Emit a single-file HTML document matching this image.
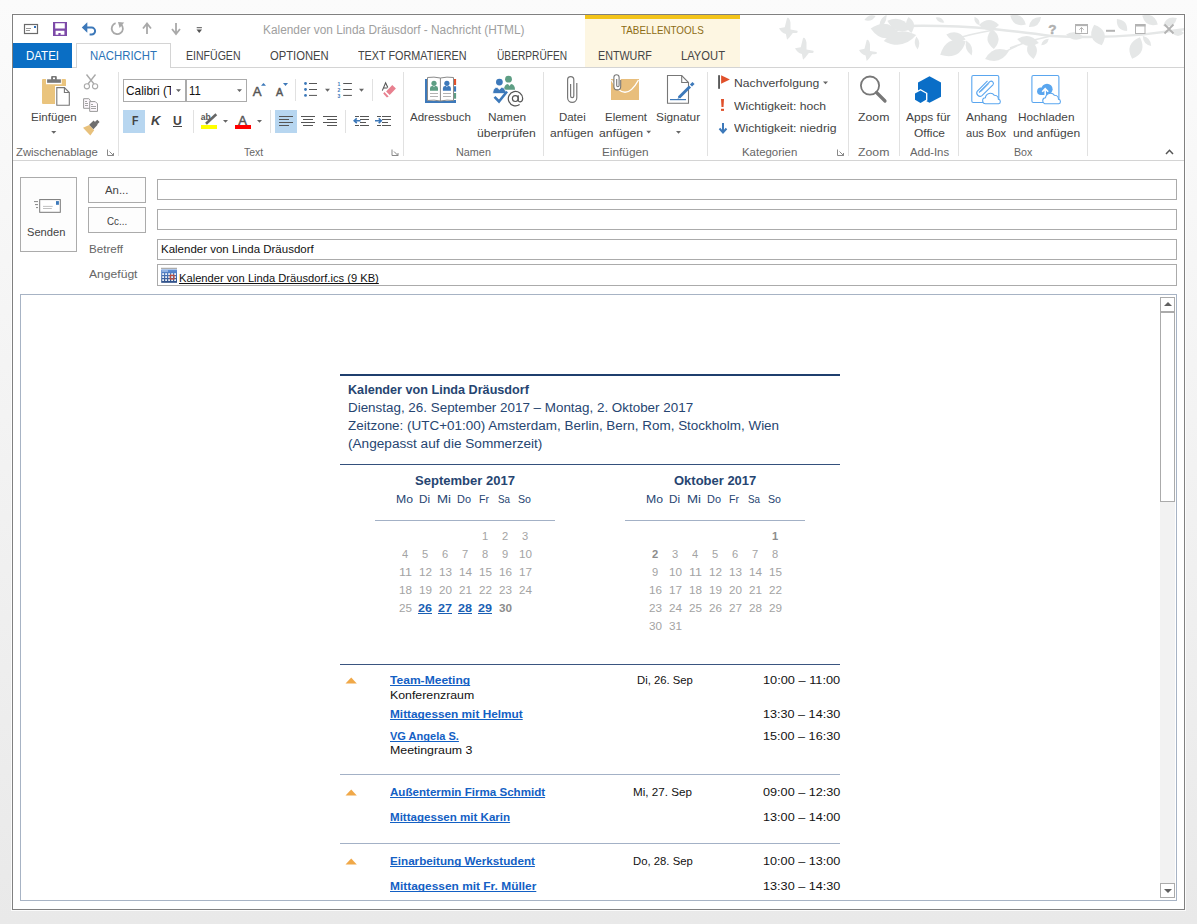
<!DOCTYPE html>
<html><head><meta charset="utf-8">
<style>
*{margin:0;padding:0;box-sizing:border-box}
html,body{width:1197px;height:924px;overflow:hidden}
body{background:linear-gradient(#fbfbfb,#f3f3f3 45%,#e9e9e9);font-family:"Liberation Sans",sans-serif;position:relative}
.a{position:absolute}
.t{text-decoration-skip-ink:none;position:absolute;white-space:nowrap;line-height:1;transform-origin:0 0}
svg{position:absolute;overflow:visible}
</style></head><body>
<div class="a" style="left:12px;top:14px;width:1173px;height:896px;border:1px solid #808080;background:#fff;box-shadow:0 0 0 1px rgba(255,255,255,.8)"></div>
<svg style="left:0;top:0" width="1197" height="924"><defs><clipPath id="tb"><rect x="740" y="15" width="444" height="52"></rect></clipPath></defs><g clip-path="url(#tb)"><path transform="translate(779 18) scale(1.15)" d="M0 9 L5 8 L7 0 Q9 -1 10 4 L10 10 L16 11 Q17 13 14 13 L12 13 L9 17 L7 19 L6 14 Q2 13 0 9Z" fill="#e5e7e7"></path><path transform="translate(795 38) scale(1.15)" d="M0 9 L5 8 L7 0 Q9 -1 10 4 L10 10 L16 11 Q17 13 14 13 L12 13 L9 17 L7 19 L6 14 Q2 13 0 9Z" fill="#e5e7e7"></path><path transform="translate(859 40) scale(1.1)" d="M0 9 L5 8 L7 0 Q9 -1 10 4 L10 10 L16 11 Q17 13 14 13 L12 13 L9 17 L7 19 L6 14 Q2 13 0 9Z" fill="#e5e7e7"></path><path d="M905 26 Q950 25 993 29 Q1030 33 1051 36 Q1098 38.5 1142 34.6 Q1165 32 1186 29" fill="none" stroke="#e5e7e7" stroke-width="2.4"></path><path d="M991 30.5 Q970 34 952 40 M1000 54.6 Q1015 46 1029 41 M1051 36 Q1030 40 1010 48 M885 33 Q900 30 913 26" fill="none" stroke="#e5e7e7" stroke-width="1.4"></path><path d="M870.7 28.5 Q882.5 45.3 899.3 33.5 Q887.5 16.7 870.7 28.5Z" fill="#e5e7e7"></path><path d="M879.5 27.1 Q887.2 23.4 886.5 14.9 Q878.8 18.6 879.5 27.1Z" fill="#e5e7e7"></path><path d="M887.3 20.7 Q895.2 35.6 910.7 29.3 Q902.8 14.4 887.3 20.7Z" fill="#e5e7e7"></path><path d="M908.6 17.1 Q902.1 26.4 911.4 32.9 Q917.9 23.6 908.6 17.1Z" fill="#e5e7e7"></path><path d="M883.8 40.9 Q902.3 51.0 916.2 35.1 Q897.7 25.0 883.8 40.9Z" fill="#e5e7e7"></path><path d="M916.4 36.5 Q912.5 43.4 917.6 49.5 Q921.5 42.6 916.4 36.5Z" fill="#e5e7e7"></path><path d="M946.3 34.4 Q953.7 45.7 965.7 39.6 Q958.3 28.3 946.3 34.4Z" fill="#e5e7e7"></path><path d="M940.2 54.8 Q959.8 60.8 965.8 41.2 Q946.2 35.2 940.2 54.8Z" fill="#e5e7e7"></path><path d="M966.3 40.5 Q963.7 49.9 971.7 55.5 Q974.3 46.1 966.3 40.5Z" fill="#e5e7e7"></path><path d="M979.0 25.0 Q989.0 35.0 999.0 25.0 Q989.0 15.0 979.0 25.0Z" fill="#e5e7e7"></path><path d="M992.1 29.0 Q982.0 40.0 993.9 49.0 Q1004.0 38.0 992.1 29.0Z" fill="#e5e7e7"></path><path d="M974.5 16.7 Q973.5 23.0 979.5 25.3 Q980.5 19.0 974.5 16.7Z" fill="#e5e7e7"></path><path d="M985.1 58.9 Q1000.5 65.7 1008.9 51.1 Q993.5 44.3 985.1 58.9Z" fill="#e5e7e7"></path><path d="M864.4 20.1 Q871.6 22.5 875.6 15.9 Q868.4 13.5 864.4 20.1Z" fill="#e5e7e7"></path><path d="M1010.2 15.5 Q1013.5 27.8 1025.8 24.5 Q1022.5 12.2 1010.2 15.5Z" fill="#e5e7e7"></path><path d="M1028.9 27.1 Q1039.6 27.5 1041.1 16.9 Q1030.4 16.5 1028.9 27.1Z" fill="#e5e7e7"></path><path d="M1017.2 39.1 Q1026.3 50.7 1038.8 42.9 Q1029.7 31.3 1017.2 39.1Z" fill="#e5e7e7"></path><path d="M1030.4 41.1 Q1022.3 51.7 1033.6 58.9 Q1041.7 48.3 1030.4 41.1Z" fill="#e5e7e7"></path><path d="M1041.2 45.2 Q1047.6 45.1 1048.8 38.8 Q1042.4 38.9 1041.2 45.2Z" fill="#e5e7e7"></path><path d="M1094.2 24.7 Q1085.6 39.5 1101.8 45.3 Q1110.4 30.5 1094.2 24.7Z" fill="#e5e7e7"></path><path d="M1066.1 34.4 Q1073.7 43.1 1083.9 37.6 Q1076.3 28.9 1066.1 34.4Z" fill="#e5e7e7"></path><path d="M1116.9 18.9 Q1115.9 30.1 1127.1 31.1 Q1128.1 19.9 1116.9 18.9Z" fill="#e5e7e7"></path><path d="M1132.1 58.8 Q1147.9 52.3 1139.9 37.2 Q1124.1 43.7 1132.1 58.8Z" fill="#e5e7e7"></path><path d="M1142.8 36.0 Q1143.0 44.3 1151.2 46.0 Q1151.0 37.7 1142.8 36.0Z" fill="#e5e7e7"></path><path d="M1142.2 15.5 Q1145.5 27.8 1157.8 24.5 Q1154.5 12.2 1142.2 15.5Z" fill="#e5e7e7"></path><path d="M1163.1 26.0 Q1174.0 28.9 1176.9 18.0 Q1166.0 15.1 1163.1 26.0Z" fill="#e5e7e7"></path><path d="M1172.0 33.0 Q1178.0 39.0 1184.0 33.0 Q1178.0 27.0 1172.0 33.0Z" fill="#e5e7e7"></path><path d="M935.7 17.5 Q938.0 23.5 944.3 22.5 Q942.0 16.5 935.7 17.5Z" fill="#e5e7e7"></path></g></svg>
<div class="a" style="left:585px;top:15px;width:155px;height:52px;background:#fdf6e2"></div>
<div class="a" style="left:585px;top:15px;width:155px;height:4px;background:#f3c41a"></div>
<div class="t" style="left: 621px; top: 25px; font-size: 11.5px; color: rgb(140, 108, 20); transform: scaleX(0.8549);">TABELLENTOOLS</div>
<div class="t" style="left: 262.5px; top: 24px; font-size: 12.5px; color: rgb(160, 160, 160); transform: scaleX(0.9481);">Kalender von Linda Dräusdorf - Nachricht (HTML)</div>
<div class="a" style="left:13px;top:67px;width:1171px;height:1px;background:#d4d4d4"></div>
<div class="a" style="left:13px;top:43px;width:59px;height:25px;background:#0a6ec4"></div>
<div class="a" style="left:76px;top:43px;width:95px;height:25px;background:#fff;border:1px solid #d4d4d4;border-bottom:none"></div>
<div class="t" style="left: 26px; top: 49px; font-size: 13px; color: rgb(255, 255, 255); transform: scaleX(0.8841);">DATEI</div>
<div class="t" style="left: 89.6px; top: 49px; font-size: 13px; color: rgb(43, 115, 183); transform: scaleX(0.8738);">NACHRICHT</div>
<div class="t" style="left: 186px; top: 49px; font-size: 13px; color: rgb(68, 68, 68); transform: scaleX(0.8114);">EINFÜGEN</div>
<div class="t" style="left: 270px; top: 49px; font-size: 13px; color: rgb(68, 68, 68); transform: scaleX(0.8644);">OPTIONEN</div>
<div class="t" style="left: 358.1px; top: 49px; font-size: 13px; color: rgb(68, 68, 68); transform: scaleX(0.833);">TEXT FORMATIEREN</div>
<div class="t" style="left: 496.6px; top: 49px; font-size: 13px; color: rgb(68, 68, 68); transform: scaleX(0.7826);">ÜBERPRÜFEN</div>
<div class="t" style="left: 598.3px; top: 49px; font-size: 13px; color: rgb(68, 68, 68); transform: scaleX(0.8262);">ENTWURF</div>
<div class="t" style="left: 681.4px; top: 49px; font-size: 13px; color: rgb(68, 68, 68); transform: scaleX(0.8617);">LAYOUT</div>
<div class="a" style="left:13px;top:160px;width:1171px;height:1px;background:#d4d4d4"></div>
<div class="a" style="left:118px;top:72px;width:1px;height:84px;background:#e1e1e1"></div>
<div class="a" style="left:403px;top:72px;width:1px;height:84px;background:#e1e1e1"></div>
<div class="a" style="left:543px;top:72px;width:1px;height:84px;background:#e1e1e1"></div>
<div class="a" style="left:707px;top:72px;width:1px;height:84px;background:#e1e1e1"></div>
<div class="a" style="left:848px;top:72px;width:1px;height:84px;background:#e1e1e1"></div>
<div class="a" style="left:899px;top:72px;width:1px;height:84px;background:#e1e1e1"></div>
<div class="a" style="left:958px;top:72px;width:1px;height:84px;background:#e1e1e1"></div>
<div class="a" style="left:1087px;top:72px;width:1px;height:84px;background:#e1e1e1"></div>
<div class="t" style="left: 16.2px; top: 148px; font-size: 10.2px; color: rgb(102, 102, 102); transform: scaleX(1.1124);">Zwischenablage</div>
<div class="t" style="left: 243.5px; top: 148px; font-size: 10.2px; color: rgb(102, 102, 102); transform: scaleX(1.0221);">Text</div>
<div class="t" style="left: 455.7px; top: 148px; font-size: 10.2px; color: rgb(102, 102, 102); transform: scaleX(1.0626);">Namen</div>
<div class="t" style="left: 602px; top: 148px; font-size: 10.2px; color: rgb(102, 102, 102); transform: scaleX(1.1587);">Einfügen</div>
<div class="t" style="left: 742.4px; top: 148px; font-size: 10.2px; color: rgb(102, 102, 102); transform: scaleX(1.1221);">Kategorien</div>
<div class="t" style="left: 858px; top: 148px; font-size: 10.2px; color: rgb(102, 102, 102); transform: scaleX(1.2055);">Zoom</div>
<div class="t" style="left: 909.6px; top: 148px; font-size: 10.2px; color: rgb(102, 102, 102); transform: scaleX(1.1137);">Add-Ins</div>
<div class="t" style="left: 1013.8px; top: 148px; font-size: 10.2px; color: rgb(102, 102, 102); transform: scaleX(1.0477);">Box</div>
<div class="t" style="left: 30.7px; top: 112px; font-size: 11px; color: rgb(68, 68, 68); transform: scaleX(1.0521);">Einfügen</div>
<div class="t" style="left: 410.4px; top: 112px; font-size: 11px; color: rgb(68, 68, 68); transform: scaleX(1.0466);">Adressbuch</div>
<div class="t" style="left: 487.5px; top: 112px; font-size: 11px; color: rgb(68, 68, 68); transform: scaleX(1.0742);">Namen</div>
<div class="t" style="left: 477.2px; top: 128px; font-size: 11px; color: rgb(68, 68, 68); transform: scaleX(1.1049);">überprüfen</div>
<div class="t" style="left: 559.3px; top: 112px; font-size: 11px; color: rgb(68, 68, 68); transform: scaleX(1.0394);">Datei</div>
<div class="t" style="left: 550.2px; top: 128px; font-size: 11px; color: rgb(68, 68, 68); transform: scaleX(1.0939);">anfügen</div>
<div class="t" style="left: 604.6px; top: 112px; font-size: 11px; color: rgb(68, 68, 68); transform: scaleX(1.0407);">Element</div>
<div class="t" style="left: 599.4px; top: 128px; font-size: 11px; color: rgb(68, 68, 68); transform: scaleX(1.109);">anfügen</div>
<div class="t" style="left: 655.9px; top: 112px; font-size: 11px; color: rgb(68, 68, 68); transform: scaleX(1.076);">Signatur</div>
<div class="t" style="left: 734.3px; top: 78px; font-size: 11px; color: rgb(68, 68, 68); transform: scaleX(1.1056);">Nachverfolgung</div>
<div class="t" style="left: 734.3px; top: 101px; font-size: 11px; color: rgb(68, 68, 68); transform: scaleX(1.1076);">Wichtigkeit: hoch</div>
<div class="t" style="left: 734.3px; top: 123px; font-size: 11px; color: rgb(68, 68, 68); transform: scaleX(1.1102);">Wichtigkeit: niedrig</div>
<div class="t" style="left: 858px; top: 112px; font-size: 11px; color: rgb(68, 68, 68); transform: scaleX(1.1164);">Zoom</div>
<div class="t" style="left: 906.3px; top: 112px; font-size: 11px; color: rgb(68, 68, 68); transform: scaleX(1.0886);">Apps für</div>
<div class="t" style="left: 914px; top: 128px; font-size: 11px; color: rgb(68, 68, 68); transform: scaleX(1.0865);">Office</div>
<div class="t" style="left: 965.6px; top: 112px; font-size: 11px; color: rgb(68, 68, 68); transform: scaleX(1.0834);">Anhang</div>
<div class="t" style="left: 966px; top: 128px; font-size: 11px; color: rgb(68, 68, 68); transform: scaleX(1.0088);">aus Box</div>
<div class="t" style="left: 1017.8px; top: 112px; font-size: 11px; color: rgb(68, 68, 68); transform: scaleX(1.0743);">Hochladen</div>
<div class="t" style="left: 1012.6px; top: 128px; font-size: 11px; color: rgb(68, 68, 68); transform: scaleX(1.0969);">und anfügen</div>
<div class="a" style="left:123px;top:79px;width:124px;height:23px;border:1px solid #ababab;background:#fff"></div>
<div class="a" style="left:185px;top:79px;width:2px;height:23px;background:#ababab"></div>
<div class="t" style="left: 126.4px; top: 85px; font-size: 12.8px; color: rgb(17, 17, 17); transform: scaleX(0.9267);">Calibri (T</div>
<div class="a" style="left:171.3px;top:82px;width:5px;height:17px;background:#fff"></div>
<div class="t" style="left: 188.6px; top: 85px; font-size: 12.5px; color: rgb(17, 17, 17); transform: scaleX(0.9011);">11</div>
<div class="a" style="left:123px;top:110px;width:22px;height:23px;background:#b7d6f0"></div>
<div class="a" style="left:275px;top:110px;width:22px;height:23px;background:#b7d6f0"></div>
<div class="t" style="left: 131.5px; top: 115px; font-size: 12px; color: rgb(68, 68, 68); font-weight: bold; transform: scaleX(0.8851);">F</div>
<div class="t" style="left: 150.5px; top: 115px; font-size: 12px; color: rgb(68, 68, 68); font-weight: bold; font-style: italic; transform: scaleX(1.0955);">K</div>
<div class="t" style="left: 173.2px; top: 115px; font-size: 12px; color: rgb(68, 68, 68); font-weight: bold; transform: scaleX(1.0148);">U</div>
<div class="a" style="left:173px;top:126px;width:9px;height:1px;background:#444"></div>
<div class="a" style="left:20px;top:177px;width:57px;height:75px;border:1px solid #ababab;background:#fdfdfd"></div>
<div class="a" style="left:88px;top:177px;width:58px;height:26px;border:1px solid #ababab;background:#fdfdfd"></div>
<div class="a" style="left:88px;top:207px;width:58px;height:26px;border:1px solid #ababab;background:#fdfdfd"></div>
<div class="a" style="left:157px;top:179px;width:1020px;height:21px;border:1px solid #ababab;background:#fff"></div>
<div class="a" style="left:157px;top:209px;width:1020px;height:21px;border:1px solid #ababab;background:#fff"></div>
<div class="a" style="left:157px;top:239px;width:1020px;height:21px;border:1px solid #ababab;background:#fff"></div>
<div class="a" style="left:157px;top:264px;width:1020px;height:22px;border:1px solid #ababab;background:#fff"></div>
<div class="t" style="left: 27.4px; top: 227px; font-size: 11.5px; color: rgb(68, 68, 68); transform: scaleX(0.9683);">Senden</div>
<div class="t" style="left: 105.2px; top: 185px; font-size: 11.5px; color: rgb(68, 68, 68); transform: scaleX(0.9892);">An...</div>
<div class="t" style="left: 106.9px; top: 216px; font-size: 11.5px; color: rgb(68, 68, 68); transform: scaleX(0.8502);">Cc...</div>
<div class="t" style="left: 88.5px; top: 244px; font-size: 11px; color: rgb(102, 102, 102); transform: scaleX(1.0584);">Betreff</div>
<div class="t" style="left: 88.5px; top: 269px; font-size: 11px; color: rgb(102, 102, 102); transform: scaleX(1.1011);">Angefügt</div>
<div class="t" style="left: 161.4px; top: 244px; font-size: 11.5px; color: rgb(17, 17, 17); transform: scaleX(0.9994);">Kalender von Linda Dräusdorf</div>
<div class="t" style="left: 178.8px; top: 273px; font-size: 11.5px; color: rgb(17, 17, 17); text-decoration: underline; transform: scaleX(0.9707);">Kalender von Linda Dräusdorf.ics (9 KB)</div>
<div class="a" style="left:20px;top:294px;width:1157px;height:607px;border:1px solid #a7b3c4;background:#fff"></div>
<div class="a" style="left:1160px;top:297px;width:15px;height:601px;background:#f2f2f2"></div>
<div class="a" style="left:1160px;top:297px;width:15px;height:15px;border:1px solid #ababab;background:#fff"></div>
<div class="a" style="left:1160px;top:312px;width:15px;height:190px;border:1px solid #ababab;background:#fff"></div>
<div class="a" style="left:1160px;top:883px;width:15px;height:15px;border:1px solid #ababab;background:#fff"></div>
<svg style="left:1163px;top:301px" width="10" height="6"><path d="M1 5 L5 1 L9 5Z" fill="#606060"></path></svg>
<svg style="left:1163px;top:888px" width="10" height="6"><path d="M1 1 L5 5 L9 1Z" fill="#606060"></path></svg>
<div class="a" style="left:340px;top:374px;width:500px;height:2px;background:#1f3f6e"></div>
<div class="a" style="left:340px;top:464px;width:500px;height:1px;background:#34507c"></div>
<div class="t" style="left: 347.6px; top: 384px; font-size: 12.5px; color: rgb(38, 69, 113); font-weight: bold; transform: scaleX(1.0095);">Kalender von Linda Dräusdorf</div>
<div class="t" style="left: 347.6px; top: 402px; font-size: 12.5px; color: rgb(38, 69, 113); transform: scaleX(1.0726);">Dienstag, 26. September 2017 – Montag, 2. Oktober 2017</div>
<div class="t" style="left: 347.6px; top: 420px; font-size: 12.5px; color: rgb(38, 69, 113); transform: scaleX(1.0764);">Zeitzone: (UTC+01:00) Amsterdam, Berlin, Bern, Rom, Stockholm, Wien</div>
<div class="t" style="left: 347.6px; top: 438px; font-size: 12.5px; color: rgb(38, 69, 113); transform: scaleX(1.0887);">(Angepasst auf die Sommerzeit)</div>
<div class="t" style="left: 414.9px; top: 475px; font-size: 12.2px; color: rgb(38, 69, 113); font-weight: bold; transform: scaleX(1.0695);">September 2017</div>
<div class="t" style="left: 395.7px; top: 494px; font-size: 10.8px; color: rgb(38, 69, 113); transform: scaleX(1.1333);">Mo</div>
<div class="t" style="left: 418.7px; top: 494px; font-size: 10.8px; color: rgb(38, 69, 113); transform: scaleX(1.0781);">Di</div>
<div class="t" style="left: 437.2px; top: 494px; font-size: 10.8px; color: rgb(38, 69, 113); transform: scaleX(1.2274);">Mi</div>
<div class="t" style="left: 457.2px; top: 494px; font-size: 10.8px; color: rgb(38, 69, 113); transform: scaleX(1.0136);">Do</div>
<div class="t" style="left: 479.2px; top: 494px; font-size: 10.8px; color: rgb(38, 69, 113); transform: scaleX(0.9801);">Fr</div>
<div class="t" style="left: 498.2px; top: 494px; font-size: 10.8px; color: rgb(38, 69, 113); transform: scaleX(0.9078);">Sa</div>
<div class="t" style="left: 517.7px; top: 494px; font-size: 10.8px; color: rgb(38, 69, 113); transform: scaleX(0.9835);">So</div>
<div class="a" style="left:375px;top:520px;width:180px;height:1px;background:#a3b1c6"></div>
<div class="t" style="left: 481.9px; top: 532px; font-size: 10.2px; color: rgb(163, 163, 163); transform: scaleX(1.0931);">1</div>
<div class="t" style="left: 501.9px; top: 532px; font-size: 10.2px; color: rgb(163, 163, 163); transform: scaleX(1.0931);">2</div>
<div class="t" style="left: 521.9px; top: 532px; font-size: 10.2px; color: rgb(163, 163, 163); transform: scaleX(1.0931);">3</div>
<div class="t" style="left: 401.9px; top: 550px; font-size: 10.2px; color: rgb(163, 163, 163); transform: scaleX(1.0931);">4</div>
<div class="t" style="left: 421.9px; top: 550px; font-size: 10.2px; color: rgb(163, 163, 163); transform: scaleX(1.0931);">5</div>
<div class="t" style="left: 441.9px; top: 550px; font-size: 10.2px; color: rgb(163, 163, 163); transform: scaleX(1.0931);">6</div>
<div class="t" style="left: 461.9px; top: 550px; font-size: 10.2px; color: rgb(163, 163, 163); transform: scaleX(1.0931);">7</div>
<div class="t" style="left: 481.9px; top: 550px; font-size: 10.2px; color: rgb(163, 163, 163); transform: scaleX(1.0931);">8</div>
<div class="t" style="left: 501.9px; top: 550px; font-size: 10.2px; color: rgb(163, 163, 163); transform: scaleX(1.0931);">9</div>
<div class="t" style="left: 518.5px; top: 550px; font-size: 10.2px; color: rgb(163, 163, 163); transform: scaleX(1.146);">10</div>
<div class="t" style="left: 398.5px; top: 568px; font-size: 10.2px; color: rgb(163, 163, 163); transform: scaleX(1.229);">11</div>
<div class="t" style="left: 418.5px; top: 568px; font-size: 10.2px; color: rgb(163, 163, 163); transform: scaleX(1.146);">12</div>
<div class="t" style="left: 438.5px; top: 568px; font-size: 10.2px; color: rgb(163, 163, 163); transform: scaleX(1.146);">13</div>
<div class="t" style="left: 458.5px; top: 568px; font-size: 10.2px; color: rgb(163, 163, 163); transform: scaleX(1.146);">14</div>
<div class="t" style="left: 478.5px; top: 568px; font-size: 10.2px; color: rgb(163, 163, 163); transform: scaleX(1.146);">15</div>
<div class="t" style="left: 498.5px; top: 568px; font-size: 10.2px; color: rgb(163, 163, 163); transform: scaleX(1.146);">16</div>
<div class="t" style="left: 518.5px; top: 568px; font-size: 10.2px; color: rgb(163, 163, 163); transform: scaleX(1.146);">17</div>
<div class="t" style="left: 398.5px; top: 586px; font-size: 10.2px; color: rgb(163, 163, 163); transform: scaleX(1.146);">18</div>
<div class="t" style="left: 418.5px; top: 586px; font-size: 10.2px; color: rgb(163, 163, 163); transform: scaleX(1.146);">19</div>
<div class="t" style="left: 438.5px; top: 586px; font-size: 10.2px; color: rgb(163, 163, 163); transform: scaleX(1.146);">20</div>
<div class="t" style="left: 458.5px; top: 586px; font-size: 10.2px; color: rgb(163, 163, 163); transform: scaleX(1.146);">21</div>
<div class="t" style="left: 478.5px; top: 586px; font-size: 10.2px; color: rgb(163, 163, 163); transform: scaleX(1.146);">22</div>
<div class="t" style="left: 498.5px; top: 586px; font-size: 10.2px; color: rgb(163, 163, 163); transform: scaleX(1.146);">23</div>
<div class="t" style="left: 518.5px; top: 586px; font-size: 10.2px; color: rgb(163, 163, 163); transform: scaleX(1.146);">24</div>
<div class="t" style="left: 398.5px; top: 604px; font-size: 10.2px; color: rgb(163, 163, 163); transform: scaleX(1.146);">25</div>
<div class="t" style="left: 418px; top: 604px; font-size: 10.2px; color: rgb(26, 95, 180); font-weight: bold; text-decoration: underline; transform: scaleX(1.2342);">26</div>
<div class="t" style="left: 438px; top: 604px; font-size: 10.2px; color: rgb(26, 95, 180); font-weight: bold; text-decoration: underline; transform: scaleX(1.2342);">27</div>
<div class="t" style="left: 458px; top: 604px; font-size: 10.2px; color: rgb(26, 95, 180); font-weight: bold; text-decoration: underline; transform: scaleX(1.2342);">28</div>
<div class="t" style="left: 478px; top: 604px; font-size: 10.2px; color: rgb(26, 95, 180); font-weight: bold; text-decoration: underline; transform: scaleX(1.2342);">29</div>
<div class="t" style="left: 498.5px; top: 604px; font-size: 10.2px; color: rgb(140, 140, 140); font-weight: bold; transform: scaleX(1.146);">30</div>
<div class="t" style="left: 674.2px; top: 475px; font-size: 12.2px; color: rgb(38, 69, 113); font-weight: bold; transform: scaleX(1.0656);">Oktober 2017</div>
<div class="t" style="left: 645.7px; top: 494px; font-size: 10.8px; color: rgb(38, 69, 113); transform: scaleX(1.1333);">Mo</div>
<div class="t" style="left: 668.7px; top: 494px; font-size: 10.8px; color: rgb(38, 69, 113); transform: scaleX(1.0781);">Di</div>
<div class="t" style="left: 687.2px; top: 494px; font-size: 10.8px; color: rgb(38, 69, 113); transform: scaleX(1.2274);">Mi</div>
<div class="t" style="left: 707.2px; top: 494px; font-size: 10.8px; color: rgb(38, 69, 113); transform: scaleX(1.0136);">Do</div>
<div class="t" style="left: 729.2px; top: 494px; font-size: 10.8px; color: rgb(38, 69, 113); transform: scaleX(0.9801);">Fr</div>
<div class="t" style="left: 748.2px; top: 494px; font-size: 10.8px; color: rgb(38, 69, 113); transform: scaleX(0.9078);">Sa</div>
<div class="t" style="left: 767.7px; top: 494px; font-size: 10.8px; color: rgb(38, 69, 113); transform: scaleX(0.9835);">So</div>
<div class="a" style="left:625px;top:520px;width:180px;height:1px;background:#a3b1c6"></div>
<div class="t" style="left: 771.9px; top: 532px; font-size: 10.2px; color: rgb(140, 140, 140); font-weight: bold; transform: scaleX(1.0931);">1</div>
<div class="t" style="left: 651.9px; top: 550px; font-size: 10.2px; color: rgb(140, 140, 140); font-weight: bold; transform: scaleX(1.0931);">2</div>
<div class="t" style="left: 671.9px; top: 550px; font-size: 10.2px; color: rgb(163, 163, 163); transform: scaleX(1.0931);">3</div>
<div class="t" style="left: 691.9px; top: 550px; font-size: 10.2px; color: rgb(163, 163, 163); transform: scaleX(1.0931);">4</div>
<div class="t" style="left: 711.9px; top: 550px; font-size: 10.2px; color: rgb(163, 163, 163); transform: scaleX(1.0931);">5</div>
<div class="t" style="left: 731.9px; top: 550px; font-size: 10.2px; color: rgb(163, 163, 163); transform: scaleX(1.0931);">6</div>
<div class="t" style="left: 751.9px; top: 550px; font-size: 10.2px; color: rgb(163, 163, 163); transform: scaleX(1.0931);">7</div>
<div class="t" style="left: 771.9px; top: 550px; font-size: 10.2px; color: rgb(163, 163, 163); transform: scaleX(1.0931);">8</div>
<div class="t" style="left: 651.9px; top: 568px; font-size: 10.2px; color: rgb(163, 163, 163); transform: scaleX(1.0931);">9</div>
<div class="t" style="left: 668.5px; top: 568px; font-size: 10.2px; color: rgb(163, 163, 163); transform: scaleX(1.146);">10</div>
<div class="t" style="left: 688.5px; top: 568px; font-size: 10.2px; color: rgb(163, 163, 163); transform: scaleX(1.229);">11</div>
<div class="t" style="left: 708.5px; top: 568px; font-size: 10.2px; color: rgb(163, 163, 163); transform: scaleX(1.146);">12</div>
<div class="t" style="left: 728.5px; top: 568px; font-size: 10.2px; color: rgb(163, 163, 163); transform: scaleX(1.146);">13</div>
<div class="t" style="left: 748.5px; top: 568px; font-size: 10.2px; color: rgb(163, 163, 163); transform: scaleX(1.146);">14</div>
<div class="t" style="left: 768.5px; top: 568px; font-size: 10.2px; color: rgb(163, 163, 163); transform: scaleX(1.146);">15</div>
<div class="t" style="left: 648.5px; top: 586px; font-size: 10.2px; color: rgb(163, 163, 163); transform: scaleX(1.146);">16</div>
<div class="t" style="left: 668.5px; top: 586px; font-size: 10.2px; color: rgb(163, 163, 163); transform: scaleX(1.146);">17</div>
<div class="t" style="left: 688.5px; top: 586px; font-size: 10.2px; color: rgb(163, 163, 163); transform: scaleX(1.146);">18</div>
<div class="t" style="left: 708.5px; top: 586px; font-size: 10.2px; color: rgb(163, 163, 163); transform: scaleX(1.146);">19</div>
<div class="t" style="left: 728.5px; top: 586px; font-size: 10.2px; color: rgb(163, 163, 163); transform: scaleX(1.146);">20</div>
<div class="t" style="left: 748.5px; top: 586px; font-size: 10.2px; color: rgb(163, 163, 163); transform: scaleX(1.146);">21</div>
<div class="t" style="left: 768.5px; top: 586px; font-size: 10.2px; color: rgb(163, 163, 163); transform: scaleX(1.146);">22</div>
<div class="t" style="left: 648.5px; top: 604px; font-size: 10.2px; color: rgb(163, 163, 163); transform: scaleX(1.146);">23</div>
<div class="t" style="left: 668.5px; top: 604px; font-size: 10.2px; color: rgb(163, 163, 163); transform: scaleX(1.146);">24</div>
<div class="t" style="left: 688.5px; top: 604px; font-size: 10.2px; color: rgb(163, 163, 163); transform: scaleX(1.146);">25</div>
<div class="t" style="left: 708.5px; top: 604px; font-size: 10.2px; color: rgb(163, 163, 163); transform: scaleX(1.146);">26</div>
<div class="t" style="left: 728.5px; top: 604px; font-size: 10.2px; color: rgb(163, 163, 163); transform: scaleX(1.146);">27</div>
<div class="t" style="left: 748.5px; top: 604px; font-size: 10.2px; color: rgb(163, 163, 163); transform: scaleX(1.146);">28</div>
<div class="t" style="left: 768.5px; top: 604px; font-size: 10.2px; color: rgb(163, 163, 163); transform: scaleX(1.146);">29</div>
<div class="t" style="left: 648.5px; top: 622px; font-size: 10.2px; color: rgb(163, 163, 163); transform: scaleX(1.146);">30</div>
<div class="t" style="left: 668.5px; top: 622px; font-size: 10.2px; color: rgb(163, 163, 163); transform: scaleX(1.146);">31</div>
<div class="a" style="left:340px;top:664px;width:500px;height:1px;background:#3a5580"></div>
<div class="a" style="left:340px;top:774px;width:500px;height:1px;background:#a3b1c6"></div>
<div class="a" style="left:340px;top:843px;width:500px;height:1px;background:#a3b1c6"></div>
<svg style="left:345px;top:676.5px" width="13" height="7"><path d="M0.5 6.5 L6.2 0.5 L11.8 6.5Z" fill="#f0a848"></path></svg>
<svg style="left:345px;top:788.5px" width="13" height="7"><path d="M0.5 6.5 L6.2 0.5 L11.8 6.5Z" fill="#f0a848"></path></svg>
<svg style="left:345px;top:857.5px" width="13" height="7"><path d="M0.5 6.5 L6.2 0.5 L11.8 6.5Z" fill="#f0a848"></path></svg>
<div class="t" style="left: 389.7px; top: 675px; font-size: 10.8px; color: rgb(19, 96, 196); font-weight: bold; text-decoration: underline; transform: scaleX(1.117);">Team-Meeting</div>
<div class="t" style="left: 389.7px; top: 690px; font-size: 10.8px; color: rgb(17, 17, 17); transform: scaleX(1.1405);">Konferenzraum</div>
<div class="t" style="left: 389.7px; top: 709px; font-size: 10.8px; color: rgb(19, 96, 196); font-weight: bold; text-decoration: underline; transform: scaleX(1.095);">Mittagessen mit Helmut</div>
<div class="t" style="left: 389.7px; top: 731px; font-size: 10.8px; color: rgb(19, 96, 196); font-weight: bold; text-decoration: underline; transform: scaleX(1.0222);">VG Angela S.</div>
<div class="t" style="left: 389.7px; top: 745px; font-size: 10.8px; color: rgb(17, 17, 17); transform: scaleX(1.1442);">Meetingraum 3</div>
<div class="t" style="left: 636.5px; top: 675px; font-size: 10.8px; color: rgb(17, 17, 17); transform: scaleX(1.0445);">Di, 26. Sep</div>
<div class="t" style="left: 763.3px; top: 675px; font-size: 10.8px; color: rgb(17, 17, 17); transform: scaleX(1.1831);">10:00 – 11:00</div>
<div class="t" style="left: 763.3px; top: 709px; font-size: 10.8px; color: rgb(17, 17, 17); transform: scaleX(1.1689);">13:30 – 14:30</div>
<div class="t" style="left: 763.3px; top: 731px; font-size: 10.8px; color: rgb(17, 17, 17); transform: scaleX(1.1689);">15:00 – 16:30</div>
<div class="t" style="left: 389.7px; top: 787px; font-size: 10.8px; color: rgb(19, 96, 196); font-weight: bold; text-decoration: underline; transform: scaleX(1.0728);">Außentermin Firma Schmidt</div>
<div class="t" style="left: 633.4px; top: 787px; font-size: 10.8px; color: rgb(17, 17, 17); transform: scaleX(1.0783);">Mi, 27. Sep</div>
<div class="t" style="left: 763.1px; top: 787px; font-size: 10.8px; color: rgb(17, 17, 17); transform: scaleX(1.1719);">09:00 – 12:30</div>
<div class="t" style="left: 389.7px; top: 812px; font-size: 10.8px; color: rgb(19, 96, 196); font-weight: bold; text-decoration: underline; transform: scaleX(1.0704);">Mittagessen mit Karin</div>
<div class="t" style="left: 763.1px; top: 812px; font-size: 10.8px; color: rgb(17, 17, 17); transform: scaleX(1.1719);">13:00 – 14:00</div>
<div class="t" style="left: 389.7px; top: 856px; font-size: 10.8px; color: rgb(19, 96, 196); font-weight: bold; text-decoration: underline; transform: scaleX(1.0798);">Einarbeitung Werkstudent</div>
<div class="t" style="left: 632.5px; top: 856px; font-size: 10.8px; color: rgb(17, 17, 17); transform: scaleX(1.0485);">Do, 28. Sep</div>
<div class="t" style="left: 763.1px; top: 856px; font-size: 10.8px; color: rgb(17, 17, 17); transform: scaleX(1.1719);">10:00 – 13:00</div>
<div class="t" style="left: 389.7px; top: 881px; font-size: 10.8px; color: rgb(19, 96, 196); font-weight: bold; text-decoration: underline; transform: scaleX(1.1034);">Mittagessen mit Fr. Müller</div>
<div class="t" style="left: 763.1px; top: 881px; font-size: 10.8px; color: rgb(17, 17, 17); transform: scaleX(1.1719);">13:30 – 14:30</div>
<svg style="left:0;top:0" width="1197" height="924"><rect x="24.5" y="24.5" width="13" height="9" fill="none" stroke="#6a6a6a" stroke-width="1.2"></rect><rect x="34" y="26" width="2" height="2" fill="#2f6fb8"></rect><rect x="26" y="28" width="5" height="1" fill="#999"></rect><rect x="26" y="30" width="4" height="1" fill="#999"></rect><path d="M53 22 H67 V36 H53Z M55.2 23.2 V28.6 H64.8 V23.2Z M55.6 30.8 V34.8 H58.4 V33 H60.6 V34.8 H64.4 V30.8Z" fill="#7d4aa8" fill-rule="evenodd"></path><path d="M84.5 27.6 H91.6 A3.5 3.5 0 0 1 91.6 34.6 H89.6" fill="none" stroke="#3c78b9" stroke-width="2"></path><path d="M81.8 27.5 L87.3 22.3 L87.3 32.7Z" fill="#3c78b9"></path><path d="M121.3 24.6 A5.6 5.6 0 1 1 115.6 23.2" fill="none" stroke="#a9a9a9" stroke-width="1.8"></path><path d="M118 22 L124.2 22.4 L119.6 28Z" fill="#a9a9a9"></path><path d="M147 34 V24.5 M143 28.5 L147 23.5 L151 28.5" fill="none" stroke="#a9a9a9" stroke-width="1.8"></path><path d="M176 23 V33 M172 29 L176 34 L180 29" fill="none" stroke="#a9a9a9" stroke-width="1.8"></path><rect x="196.7" y="27.2" width="5.2" height="1" fill="#555"></rect><path d="M196.5 29.5 H202 L199.25 32.9Z" fill="#555"></path><text x="1048.3" y="34" font-family="Liberation Sans" font-weight="bold" font-size="13.5" fill="#b0b0b0" stroke="#b0b0b0" stroke-width="0.5">?</text><rect x="1075.5" y="24.5" width="12" height="9" fill="none" stroke="#b3b3b3" stroke-width="1"></rect><rect x="1075.5" y="24.5" width="12" height="1.6" fill="#b3b3b3"></rect><path d="M1081.5 32.5 V27.5 M1079.3 29.7 L1081.5 27.5 L1083.7 29.7" fill="none" stroke="#b3b3b3" stroke-width="1"></path><rect x="1106" y="29.8" width="9" height="2" fill="#b3b3b3"></rect><rect x="1135.5" y="24.5" width="9.5" height="9" fill="none" stroke="#b3b3b3" stroke-width="1"></rect><rect x="1135" y="24.2" width="10.5" height="2.3" fill="#b3b3b3"></rect><path d="M1164.5 24.5 L1173.5 33.5 M1173.5 24.5 L1164.5 33.5" stroke="#b3b3b3" stroke-width="1.8"></path><path d="M42 80 Q42 79 43 79 H46 V84.2 H61.7 V79 H65 Q66 79 66 80 V86 H55 V104 H43 Q42 104 42 103Z" fill="#eac47d"></path><rect x="47.1" y="79.3" width="13.8" height="3.5" fill="#787878"></rect><path d="M51.1 82 V77 Q51.1 76 52.1 76 H55.8 Q56.8 76 56.8 77 V82Z M53 77.6 V79.6 H55 V77.6Z" fill="#787878" fill-rule="evenodd"></path><path d="M56.8 87.6 H64.4 L69.3 92.5 V105.3 H56.8Z" fill="#fff" stroke="#777" stroke-width="1.1"></path><path d="M64.4 87.6 V92.5 H69.3" fill="none" stroke="#777" stroke-width="1.1"></path><circle cx="86.9" cy="86.3" r="2.6" fill="none" stroke="#aaa" stroke-width="1.1"></circle><circle cx="95.1" cy="86.3" r="2.6" fill="none" stroke="#aaa" stroke-width="1.1"></circle><path d="M88 84 L95.5 74.5 M94 84 L86.5 74.5" stroke="#aaa" stroke-width="1.4"></path><path d="M83.6 98.7 H88.8 L90.2 100 V108.3 H83.6Z" fill="#fdf8fd" stroke="#999" stroke-width="1"></path><path d="M89.7 101.6 H95.3 L97.5 103.8 V111.4 H89.7Z" fill="#fdf8fd" stroke="#999" stroke-width="1"></path><path d="M85 101.5 H87 M85 103.5 H88 M85 105.5 H88 M91 104.5 H93 M91 106.5 H96 M91 108.5 H96" stroke="#999" stroke-width="0.9"></path><path d="M83 127.8 L89.3 125 L94.2 130.3 L90.3 135.6Z" fill="#e8c17c"></path><path d="M89.2 124.8 L93.6 120.6 L97.6 124.8 L93.4 129.2Z" fill="#6e6e6e"></path><path d="M94.6 122.2 L97.3 119.8 L99.6 122.1 L97 124.6Z" fill="#6e6e6e"></path><path d="M51.2 131 H56.3 L53.75 133.8Z" fill="#666"></path><path d="M107.5 149.5 V155.5 H113.5 M109.5 151.5 L113.5 155.5 M111 155.5 H113.5 V153" fill="none" stroke="#888" stroke-width="1"></path><path d="M176 89.3 H181 L178.5 92.1Z M237 89.3 H242 L239.5 92.1Z" fill="#666"></path><text x="252.8" y="95.8" font-family="Liberation Sans" font-size="13.2" fill="#555" stroke="#555" stroke-width="0.45">A</text><path d="M261 85.7 L263.5 82.9 L266 85.7Z" fill="#3c78b9"></path><text x="276" y="95.8" font-family="Liberation Sans" font-size="10.6" fill="#555" stroke="#555" stroke-width="0.45">A</text><path d="M283 82.9 H288 L285.5 86Z" fill="#3c78b9"></path><rect x="295" y="79" width="1" height="22" fill="#e1e1e1"></rect><rect x="372" y="79" width="1" height="22" fill="#e1e1e1"></rect><rect x="193" y="110" width="1" height="23" fill="#e1e1e1"></rect><rect x="270" y="110" width="1" height="23" fill="#e1e1e1"></rect><rect x="345" y="110" width="1" height="23" fill="#e1e1e1"></rect><circle cx="305.5" cy="83.5" r="1.4" fill="#3c78b9"></circle><rect x="309" y="83.0" width="8" height="1" fill="#555"></rect><rect x="343.2" y="83.0" width="8.7" height="1" fill="#555"></rect><circle cx="305.5" cy="89.5" r="1.4" fill="#3c78b9"></circle><rect x="309" y="89.0" width="8" height="1" fill="#555"></rect><rect x="343.2" y="89.0" width="8.7" height="1" fill="#555"></rect><circle cx="305.5" cy="95.4" r="1.4" fill="#3c78b9"></circle><rect x="309" y="94.9" width="8" height="1" fill="#555"></rect><rect x="343.2" y="94.9" width="8.7" height="1" fill="#555"></rect><text x="337.6" y="86.3" font-family="Liberation Sans" font-weight="bold" font-size="5" fill="#3c78b9">1</text><text x="337.6" y="92.3" font-family="Liberation Sans" font-weight="bold" font-size="5" fill="#3c78b9">2</text><text x="337.6" y="98.2" font-family="Liberation Sans" font-weight="bold" font-size="5" fill="#3c78b9">3</text><path d="M325 88.8 H330 L327.5 91.8Z M359 88.8 H364 L361.5 91.8Z" fill="#666"></path><path d="M382.3 90.6 L385.6 82.8 L387.8 87.5 M383.6 88 H387.3" fill="none" stroke="#555" stroke-width="1.1"></path><path d="M386.1 91.4 L392.3 85 L395.9 88.5 L389.7 94.9Z" fill="#e8808f"></path><path d="M384.4 92 L388.7 96.6 L386.9 97.5 L383.2 93.5Z" fill="#e8808f"></path><text x="200.8" y="119.8" font-family="Liberation Sans" font-weight="bold" font-size="8.5" fill="#555">ab</text><path d="M206 123.8 L216.3 114.3" stroke="#666" stroke-width="2.6"></path><rect x="201" y="125" width="16" height="4" fill="#ffff00"></rect><path d="M223 119.9 H228 L225.5 122.7Z M257 119.9 H262 L259.5 122.7Z" fill="#666"></path><text x="238.3" y="125" font-family="Liberation Sans" font-size="13" fill="#555" stroke="#555" stroke-width="0.45">A</text><rect x="235" y="125" width="16" height="4" fill="#ff0000"></rect><rect x="279" y="116" width="14" height="1" fill="#555"></rect><rect x="279" y="119" width="10" height="1" fill="#555"></rect><rect x="279" y="122" width="14" height="1" fill="#555"></rect><rect x="279" y="125" width="10" height="1" fill="#555"></rect><rect x="301" y="116" width="14" height="1" fill="#555"></rect><rect x="303" y="119" width="10" height="1" fill="#555"></rect><rect x="301" y="122" width="14" height="1" fill="#555"></rect><rect x="303" y="125" width="10" height="1" fill="#555"></rect><rect x="323" y="116" width="14" height="1" fill="#555"></rect><rect x="327" y="119" width="10" height="1" fill="#555"></rect><rect x="323" y="122" width="14" height="1" fill="#555"></rect><rect x="327" y="125" width="10" height="1" fill="#555"></rect><rect x="360" y="116" width="9" height="1" fill="#555"></rect><rect x="360" y="119" width="9" height="1" fill="#555"></rect><rect x="360" y="122" width="6" height="1" fill="#555"></rect><rect x="360" y="125" width="9" height="1" fill="#555"></rect><rect x="382" y="116" width="9" height="1" fill="#555"></rect><rect x="382" y="119" width="9" height="1" fill="#555"></rect><rect x="382" y="122" width="6" height="1" fill="#555"></rect><rect x="382" y="125" width="9" height="1" fill="#555"></rect><rect x="355" y="116" width="4" height="1" fill="#555"></rect><rect x="355" y="125" width="4" height="1" fill="#555"></rect><rect x="377" y="116" width="4" height="1" fill="#555"></rect><rect x="377" y="125" width="4" height="1" fill="#555"></rect><path d="M360.5 120.7 H354.5 M356.8 118.3 L354.2 120.7 L356.8 123.1" fill="none" stroke="#3c78b9" stroke-width="1.6"></path><path d="M375 120.7 H381 M378.7 118.3 L381.3 120.7 L378.7 123.1" fill="none" stroke="#3c78b9" stroke-width="1.6"></path><path d="M392 149.5 V155.5 H398 M394 151.5 L398 155.5 M395.5 155.5 H398 V153" fill="none" stroke="#888" stroke-width="1"></path><path d="M425 79 H428 V101 H453 V100 H456 V103 H425Z" fill="#3d79ba"></path><rect x="452.5" y="79" width="3.6" height="6" fill="#e0502a"></rect><rect x="452.5" y="86.3" width="3.6" height="5.3" fill="#3d79ba"></rect><rect x="452.5" y="93" width="3.6" height="5.7" fill="#5e9e84"></rect><path d="M427.5 77.5 Q434 76.5 440.4 78 Q447 76.5 453.5 77.5 V100.5 Q447 99.5 440.4 101 Q434 99.5 427.5 100.5Z" fill="#fff" stroke="#8a8a8a" stroke-width="1"></path><path d="M440.4 78 V101" stroke="#8a8a8a" stroke-width="1"></path><circle cx="434" cy="83.3" r="2.6" fill="#5e9e84"></circle><path d="M430 90.8 V88.3 Q430 86.1 432.3 86.1 H433.2 L434 87.2 L434.8 86.1 H435.7 Q438 86.1 438 88.3 V90.8Z" fill="#5e9e84"></path><circle cx="446.9" cy="83.3" r="2.6" fill="#3d79ba"></circle><path d="M442.9 90.8 V88.3 Q442.9 86.1 445.2 86.1 H446.1 L446.9 87.2 L447.7 86.1 H448.6 Q450.9 86.1 450.9 88.3 V90.8Z" fill="#3d79ba"></path><path d="M430 93.5 H438 M430 96.5 H438 M443 93.5 H451 M443 96.5 H451" stroke="#aaa" stroke-width="0.9"></path><circle cx="508.5" cy="79.2" r="3.4" fill="#5e9e84"></circle><path d="M504 89.8 Q504 84.6 508 84 L509.5 86 L511 84 Q515 84.6 515 89.8Z" fill="#5e9e84"></path><circle cx="499.4" cy="82.1" r="3.4" fill="#3d79ba"></circle><path d="M492.8 93.6 Q492.8 87.9 497 87.3 L499.3 89.6 L501.6 87.3 Q505.8 87.9 505.8 93.6Z" fill="#3d79ba" stroke="#fff" stroke-width="0.7"></path><path d="M494.5 96.8 L499 101.5 L507 91.5" fill="none" stroke="#3d79ba" stroke-width="2.6"></path><circle cx="515.3" cy="98.6" r="2.9" fill="none" stroke="#555" stroke-width="1.2"></circle><path d="M518.2 95.3 V100.2 Q518.4 102 520.3 101.8 Q522.6 101.4 522.7 98.4 A7.2 7.2 0 1 0 519.6 104.6" fill="none" stroke="#555" stroke-width="1.2"></path><path d="M576.8 83 V97.8 A4.6 4.6 0 0 1 567.6 97.8 V79.8 A3.1 3.1 0 0 1 573.8 79.8 V96 A1.6 1.6 0 0 1 570.6 96 V84" fill="none" stroke="#777" stroke-width="1.2"></path><rect x="611" y="79" width="28" height="21" fill="#e8be7c"></rect><path d="M611.5 80 Q625 104.6 638.5 80" fill="none" stroke="#fff" stroke-width="1.4"></path><path d="M613.9 86 V77.3 A3.4 3.4 0 0 1 620.7 77.3 V86 A3.4 3.4 0 0 1 613.9 86Z" fill="#fff"></path><path d="M620.7 80 V86.5 A3.4 3.4 0 0 1 613.9 86.5 V77.3 A2.6 2.6 0 0 1 619.1 77.3 V85.5 A1.2 1.2 0 0 1 616.7 85.5 V79" fill="none" stroke="#777" stroke-width="1.1"></path><path d="M646.3 130.8 H651.1 L648.7 133.6Z M676 131 H681 L678.5 133.8Z" fill="#666"></path><path d="M667.5 75.5 H681.7 L688.5 82.5 V103.3 H667.5Z" fill="#fff" stroke="#777" stroke-width="1.1"></path><path d="M681.7 75.5 V82.5 H688.5" fill="none" stroke="#777" stroke-width="1.1"></path><rect x="670" y="99" width="16" height="1.2" fill="#3d79ba"></rect><path d="M679 97.5 L690 86.5" stroke="#3d79ba" stroke-width="3"></path><path d="M691 85.5 L693.5 83" stroke="#3d79ba" stroke-width="3"></path><path d="M677.5 99 L679 96 L680.5 97.5Z" fill="#3d79ba"></path><rect x="718.1" y="75.2" width="1.9" height="13.6" fill="#5a5a5a"></rect><path d="M721.1 75.2 L729.9 79.4 L721.1 83.8Z" fill="#e0502a"></path><rect x="821.5" y="81" width="0" height="0"></rect><path d="M823 81.5 H828 L825.5 84.3Z" fill="#666"></path><path d="M721 99 H724 L723.5 107 H721.5Z" fill="#e0502a"></path><rect x="721" y="108.8" width="3" height="2.1" fill="#e0502a"></rect><path d="M723 123 V132 M719.5 128.5 L723 132.5 L726.5 128.5" fill="none" stroke="#3d79ba" stroke-width="2"></path><path d="M837.5 149.5 V155.5 H843.5 M839.5 151.5 L843.5 155.5 M841 155.5 H843.5 V153" fill="none" stroke="#888" stroke-width="1"></path><circle cx="870" cy="85.6" r="9.1" fill="none" stroke="#777" stroke-width="1.8"></circle><path d="M876.5 92.5 L885 101" stroke="#777" stroke-width="3.2" stroke-linecap="round"></path><path d="M929.5 76.3 L941 82.4 V96.7 L929.5 102.7 L918 96.7 V82.4Z" fill="#0a6ec7"></path><path d="M920.5 89 L927.4 92.9 V100.4 L920.5 104.2 L913.6 100.4 V92.9Z" fill="#fff"></path><path d="M920.5 90.4 L926 93.6 V99.8 L920.5 102.9 L915 99.8 V93.6Z" fill="#0a6ec7"></path><rect x="971.8" y="75.5" width="27" height="27" rx="1.5" fill="#fff" stroke="#5aa6ef" stroke-width="1.1"></rect><rect x="1031.9" y="75.5" width="27" height="27" rx="1.5" fill="#fff" stroke="#5aa6ef" stroke-width="1.1"></rect><path d="M979 92.5 L989.8 81.7 A2.2 2.2 0 0 1 992.9 84.8 L982 95.6 A3.3 3.3 0 0 1 977.4 91 L987.5 80.9" fill="none" stroke="#5aa6ef" stroke-width="1.1"></path><path d="M980.6 91.8 L988.8 83.6" fill="none" stroke="#5aa6ef" stroke-width="1"></path><path d="M985.9 103.8 A3 3 0 0 1 985.4 97.8 A5 5 0 0 1 994.4 95.3 A4 4 0 0 1 998.4 99.3 A2.3 2.3 0 0 1 998.6 103.8Z" fill="#fff" stroke="#5aa6ef" stroke-width="1.1"></path><circle cx="1040.9" cy="91.2" r="3.8" fill="#5aa6ef"></circle><circle cx="1047" cy="89.3" r="5.6" fill="#5aa6ef"></circle><rect x="1040.9" y="91" width="7" height="4" fill="#5aa6ef"></rect><path d="M1045.2 95.5 V89 M1042.2 91.8 L1045.2 88.6 L1048.2 91.8" fill="none" stroke="#fff" stroke-width="1.6"></path><path d="M1046.0 103.8 A3 3 0 0 1 1045.5 97.8 A5 5 0 0 1 1054.5 95.3 A4 4 0 0 1 1058.5 99.3 A2.3 2.3 0 0 1 1058.7 103.8Z" fill="#fff" stroke="#5aa6ef" stroke-width="1.1"></path><path d="M1166 154 L1169.5 150.3 L1173 154" fill="none" stroke="#555" stroke-width="1.5"></path><rect x="39.7" y="199.6" width="20.6" height="12.7" fill="#fff" stroke="#777" stroke-width="1"></rect><rect x="56" y="201.1" width="2.9" height="3.7" fill="#3d79ba"></rect><path d="M43 206.4 H52.7 M43 208.5 H51.8" stroke="#b0b0b0" stroke-width="0.8"></path><path d="M34 201.6 H38 M35 204.6 H38 M36 207.6 H38" stroke="#777" stroke-width="0.9"></path><defs><linearGradient id="cg" x1="0" y1="0" x2="0" y2="1"><stop offset="0" stop-color="#5e8fd9"></stop><stop offset="1" stop-color="#2c4c84"></stop></linearGradient></defs><rect x="161.2" y="269.5" width="15.8" height="13.3" fill="url(#cg)"></rect><rect x="162" y="270.5" width="6" height="1" fill="#c9dcf5"></rect><rect x="162.2" y="273.2" width="1.8" height="1.8" fill="#fff" opacity="0.9"></rect><rect x="165.2" y="273.2" width="1.8" height="1.8" fill="#fff" opacity="0.9"></rect><rect x="168.2" y="273.2" width="1.8" height="1.8" fill="#fff" opacity="0.9"></rect><rect x="171.2" y="273.2" width="1.8" height="1.8" fill="#fff" opacity="0.9"></rect><rect x="174.2" y="273.2" width="1.8" height="1.8" fill="#fff" opacity="0.9"></rect><rect x="162.2" y="276.2" width="1.8" height="1.8" fill="#fff" opacity="0.9"></rect><rect x="165.2" y="276.2" width="1.8" height="1.8" fill="#fff" opacity="0.9"></rect><rect x="168.2" y="276.2" width="1.8" height="1.8" fill="#fff" opacity="0.9"></rect><rect x="171.2" y="276.2" width="1.8" height="1.8" fill="#fff" opacity="0.9"></rect><rect x="174.2" y="276.2" width="1.8" height="1.8" fill="#fff" opacity="0.9"></rect><rect x="162.2" y="279.2" width="1.8" height="1.8" fill="#fff" opacity="0.9"></rect><rect x="165.2" y="279.2" width="1.8" height="1.8" fill="#fff" opacity="0.9"></rect><rect x="168.2" y="279.2" width="1.8" height="1.8" fill="#fff" opacity="0.9"></rect><rect x="171.2" y="279.2" width="1.8" height="1.8" fill="#fff" opacity="0.9"></rect><rect x="174.2" y="279.2" width="1.8" height="1.8" fill="#fff" opacity="0.9"></rect><rect x="170.2" y="275.2" width="3.8" height="3.8" fill="none" stroke="#e0461e" stroke-width="1"></rect><path d="M161.5 268.3 H177" stroke="#333" stroke-width="1" stroke-dasharray="1 1"></path></svg>
</body></html>
